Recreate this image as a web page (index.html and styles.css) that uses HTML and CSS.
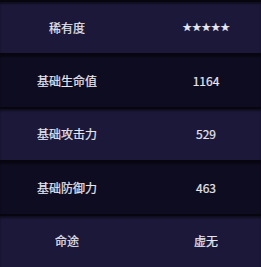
FILE: index.html
```html
<!DOCTYPE html>
<html lang="zh">
<head>
<meta charset="utf-8">
<link rel="stylesheet" href="styles.css">
</head>
<body>
<div class="table">
  <div class="row light"><div class="cell">稀有度</div><div class="cell value stars">★★★★★</div></div>
  <div class="row dark"><div class="cell">基础生命值</div><div class="cell value">1164</div></div>
  <div class="row light"><div class="cell">基础攻击力</div><div class="cell value">529</div></div>
  <div class="row dark"><div class="cell">基础防御力</div><div class="cell value">463</div></div>
  <div class="row light"><div class="cell">命途</div><div class="cell value">虚无</div></div>
</div>
</body>
</html>
```
FILE: styles.css
```css
html, body {
  margin: 0;
  padding: 0;
  overflow: hidden;
  background: #0f0d22;
}
.table {
  width: 261px;
  height: 267px;
  display: grid;
  grid-template-rows: repeat(5, 1fr);
}
.row {
  display: grid;
  grid-template-columns: 134px 1fr;
  align-items: center;
  border-top: 2px solid #07060e;
  box-shadow: inset 0 2px 2px rgba(0, 0, 0, 0.45);
}
.row.light { background: #1b1839; }
.row.dark { background: #0e0c20; }
.cell {
  text-align: center;
  font-family: "Noto Sans CJK SC", "Noto Sans", sans-serif;
  font-size: 12px;
  color: #e6e6f0;
  line-height: 16px;
  -webkit-text-stroke: 0.2px #e6e6f0;
}
.cell.value {
  padding-left: 17px;
}
.stars {
  font-family: "DejaVu Sans", sans-serif;
  font-size: 11px;
  letter-spacing: -0.4px;
}
```
